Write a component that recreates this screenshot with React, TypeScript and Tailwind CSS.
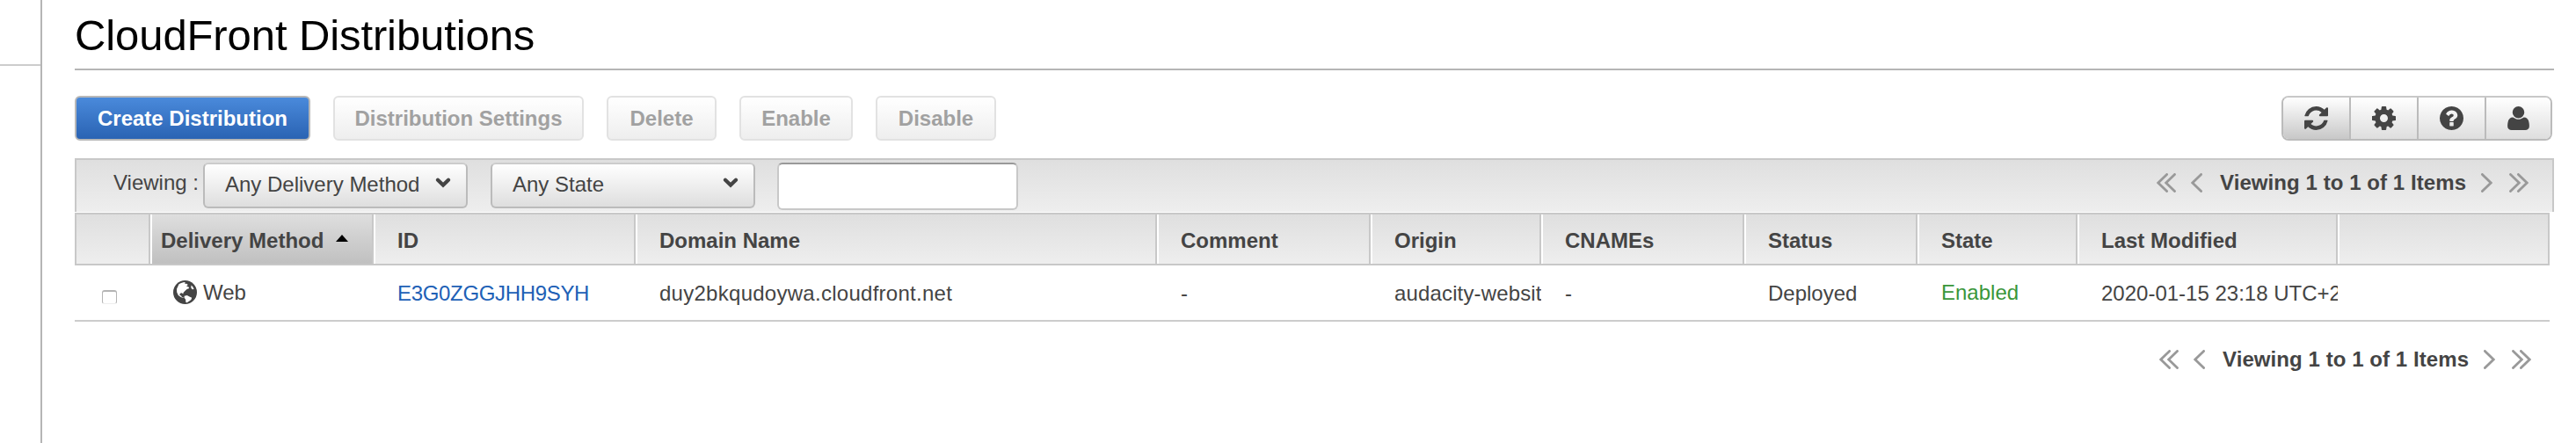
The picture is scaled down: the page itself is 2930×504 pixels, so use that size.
import React from "react";

const ICONS = {
  refresh:
    "M1511 1056q0 5-1 7-64 268-268 434.5t-478 166.5q-146 0-282.5-55t-243.5-157l-129 129q-19 19-45 19t-45-19-19-45v-448q0-26 19-45t45-19h448q26 0 45 19t19 45-19 45l-137 137q71 66 161 102t187 36q134 0 250-65t186-179q11-17 53-117 8-23 30-23h192q13 0 22.5 9.5t9.5 22.5zm25-800v448q0 26-19 45t-45 19h-448q-26 0-45-19t-19-45 19-45l138-138q-148-137-349-137-134 0-250 65t-186 179q-11 17-53 117-8 23-30 23h-199q-13 0-22.5-9.5t-9.5-22.5v-7q65-268 270-434.5t480-166.5q146 0 284 55.5t245 156.5l130-129q19-19 45-19t45 19 19 45z",
  cog: "M1024 896q0-106-75-181t-181-75-181 75-75 181 75 181 181 75 181-75 75-181zm512-109v222q0 12-8 23t-20 13l-185 28q-19 54-39 91 35 50 107 138 10 12 10 25t-9 23q-27 37-99 108t-94 71q-12 0-26-9l-138-108q-44 23-91 38-16 136-29 186-7 28-36 28h-222q-14 0-24.5-8.5t-11.5-21.5l-28-184q-49-16-90-37l-141 107q-10 9-25 9-14 0-25-11-126-114-165-168-7-10-7-23 0-12 8-23 15-21 51-66.5t54-70.5q-27-50-41-99l-183-27q-13-2-21-12.5t-8-23.5v-222q0-12 8-23t19-13l186-28q14-46 39-92-40-57-107-138-10-12-10-24 0-10 9-23 26-36 98.5-107.5t94.5-71.5q13 0 26 10l138 107q44-23 91-38 16-136 29-186 7-28 36-28h222q14 0 24.5 8.5t11.5 21.5l28 184q49 16 90 37l142-107q9-9 24-9 13 0 25 10 129 119 165 170 7 8 7 22 0 12-8 23-15 21-51 66.5t-54 70.5q26 50 41 98l183 28q13 2 21 12.5t8 23.5z",
  help: "M896 1376v-192q0-14-9-23t-23-9h-192q-14 0-23 9t-9 23v192q0 14 9 23t23 9h192q14 0 23-9t9-23zm256-672q0-88-55.5-163t-138.5-116-170-41q-243 0-371 213-15 24 8 42l132 100q7 6 19 6 16 0 25-12 53-68 86-92 34-24 86-24 48 0 85.5 26t37.5 59q0 38-20 61t-68 45q-63 28-115.5 86.5t-52.5 125.5v36q0 14 9 23t23 9h192q14 0 23-9t9-23q0-19 21.5-49.5t54.5-49.5q32-18 49-28.5t46-35 44.5-48 28-60.5 12.5-81zm384 192q0 209-103 385.5t-279.5 279.5-385.5 103-385.5-103-279.5-279.5-103-385.5 103-385.5 279.5-279.5 385.5-103 385.5 103 279.5 279.5 103 385.5z",
  user: "M1472 1405q0 120-73 189.5t-194 69.5h-874q-121 0-194-69.5t-73-189.5q0-53 3.5-103.5t14-109 26.5-108.5 43-97.5 62-81 85.5-53.500 111.500-20q9 0 42 21.500t74.500 48 108 48 133.500 21.500 133.500-21.500 108-48 74.500-48 42-21.500q61 0 111.500 20t85.500 53.500 62 81 43 97.500 26.500 108.500 14 109 3.500 103.500zm-320-893q0 159-112.500 271.500t-271.500 112.500-271.500-112.500-112.500-271.500 112.500-271.500 271.500-112.500 271.500 112.500 112.500 271.500z",
};

function ToolIcon({ d }: { d: string }) {
  return (
    <svg viewBox="0 128 1536 1536" className="size-[27px] fill-[#444]">
      <path d={d} />
    </svg>
  );
}

function Globe() {
  return (
    <svg viewBox="0 0 27 27" className="size-[27px] shrink-0">
      <circle cx="13.5" cy="13.5" r="13.5" fill="#444" />
      <path
        fill="#fff"
        d="M6.500 4.300 9 2.900l3.300-.9 1.800.7-1.200 1.400 2.300-.4 1.600 1.300-1.800 1.800 2.300.5.9 1.700-2.600 1-2.200 2-1.700 1.700-.5 1.700-1.300-1.100-2.100.4-.4 2.100 1.700.6.8 1.700 1.900.3-.5.700-2.600-1.100-2.900-2.100-1.600-3.500L4 9.800z"
      />
      <path fill="#fff" d="m12.700 17.800 3-.7 2.800 1.500 2.700 1.200-.8 2.300-2.400 1.700-2.300 1.500-1.300-.3-.3-3.200-1.500-2zM20.500 5.600l1.800 1.700 1.300 2.700-1.800.3-1.500-1.900z" />
    </svg>
  );
}

function Chevron({ double = false, flip = false }: { double?: boolean; flip?: boolean }) {
  return (
    <svg
      viewBox={double ? "0 0 22 22" : "0 0 13 22"}
      className={
        (double ? "w-[22px]" : "w-[13px]") + " h-[22px] shrink-0 fill-none stroke-[#999] stroke-[2.8]" + (flip ? " -scale-x-100" : "")
      }
      strokeLinecap="round"
    >
      <path d="M11.600 1.400 1.800 11l9.800 9.600" />
      {double && <path d="M20.500 1.400 10.700 11l9.800 9.600" />}
    </svg>
  );
}

function Pager() {
  return (
    <div className="flex h-7 items-center font-bold">
      <Chevron double />
      <span className="w-[17px]" />
      <Chevron />
      <span className="w-[299px] pl-[20px] tracking-[0.07px]">Viewing 1 to 1 of 1 Items</span>
      <span className="w-[18px]" />
      <Chevron flip />
      <span className="w-[19px]" />
      <Chevron double flip />
    </div>
  );
}

function Disabled({ children, w }: { children: string; w: string }) {
  return (
    <button
      className={
        w +
        " h-[51px] rounded-[6px] border-2 border-[#e2e2e2] bg-linear-to-b from-white to-[#eeeeee] pt-px text-center font-bold text-[#a1a1a1]"
      }
    >
      {children}
    </button>
  );
}

function Select({ label }: { label: string }) {
  return (
    <div className="flex h-[52px] w-[301px] items-center justify-between rounded-[6px] border-2 border-[#bbb] border-t-[#ccc] bg-linear-to-b from-white to-[#dedede] pr-[17px] pl-[23px]">
      <span className="-mt-[3px]">{label}</span>
      <svg viewBox="0 0 18 12" className="-mt-1.5 h-3 w-[18px] fill-none stroke-[#444] stroke-[4.2]" strokeLinecap="round">
        <path d="M3 2.800 9 8.600l6-5.800" />
      </svg>
    </div>
  );
}

const COLUMNS: { title: string; w: string; cell: React.ReactNode }[] = [
  { title: "ID", w: "w-[298px]", cell: <a className="tracking-[-0.33px] text-[#2060b6]">E3G0ZGGJHH9SYH</a> },
  { title: "Domain Name", w: "w-[593px]", cell: <span className="tracking-[0.27px]">duy2bkqudoywa.cloudfront.net</span> },
  { title: "Comment", w: "w-[243px]", cell: "-" },
  { title: "Origin", w: "w-[194px]", cell: <span className="tracking-[0.15px]">audacity-website</span> },
  { title: "CNAMEs", w: "w-[231px]", cell: "-" },
  { title: "Status", w: "w-[197px]", cell: "Deployed" },
  { title: "State", w: "w-[182px]", cell: <span className="relative -top-px text-[#3a963a]">Enabled</span> },
  { title: "Last Modified", w: "w-[296px]", cell: "2020-01-15 23:18 UTC+2" },
];

export default function App() {
  return (
    <div className="flex h-[504px] w-[2930px] overflow-hidden bg-white font-['Liberation_Sans',Arial,sans-serif] text-[24px] leading-7 whitespace-nowrap text-[#444]">
      <aside className="w-12 shrink-0 border-r-2 border-[#b5b5b5]">
        <div className="h-[75px] border-b-2 border-[#ccc]" />
      </aside>
      <main className="ml-[37px] w-[2820px]">
        <h1 className="h-20 border-b-2 border-[#b5b5b5] pt-[12px] text-[49px] leading-[56px] tracking-[-0.1px] text-black">
          CloudFront Distributions
        </h1>

        <div className="mt-[29px] flex h-[51px] justify-between pr-[2px]">
          <div className="flex">
            <button className="mr-[26px] h-[51px] w-[268px] rounded-[6px] border-2 border-[#b8b8b8] bg-linear-to-b from-[#4a8adb] to-[#2a63b3] pt-px font-bold text-white">
              Create Distribution
            </button>
            <div className="flex gap-[26px]">
              <Disabled w="w-[285px]">Distribution Settings</Disabled>
              <Disabled w="w-[125px]">Delete</Disabled>
              <Disabled w="w-[129px]">Enable</Disabled>
              <Disabled w="w-[137px]">Disable</Disabled>
            </div>
          </div>
          <div className="flex w-[308px] overflow-hidden rounded-[8px] border-2 border-[#bbb] border-t-[#c8c8c8]">
            <button className="flex w-[77px] items-center justify-center border-r-2 border-[#bbb] bg-linear-to-b from-white to-[#c8c8c8]">
              <ToolIcon d={ICONS.refresh} />
            </button>
            <button className="flex w-[77px] items-center justify-center border-r-2 border-[#bbb] bg-linear-to-b from-white to-[#dedede]">
              <ToolIcon d={ICONS.cog} />
            </button>
            <button className="flex w-[77px] items-center justify-center border-r-2 border-[#bbb] bg-linear-to-b from-white to-[#dedede]">
              <ToolIcon d={ICONS.help} />
            </button>
            <button className="flex w-[73px] items-center justify-center bg-linear-to-b from-white to-[#dedede]">
              <ToolIcon d={ICONS.user} />
            </button>
          </div>
        </div>

        <div className="mt-5 flex h-[61px] justify-between border-2 border-b-0 border-[#c8c8c8] bg-linear-to-b from-[#dfdfdf] to-[#eee] pr-[27px] pl-[42px]">
          <div className="flex pt-[3px]">
            <span className="w-[102px] pt-[9px]">Viewing :</span>
            <Select label="Any Delivery Method" />
            <span className="w-[26px]" />
            <Select label="Any State" />
            <input className="ml-[25px] h-[54px] w-[274px] rounded-[6px] border-2 border-[#c8c8c8] border-t-[#999] bg-white" />
          </div>
          <div className="pt-3">
            <Pager />
          </div>
        </div>

        <div className="mt-px w-[2815px]">
          <div className="flex h-[60px] border-2 border-[#c8c8c8] bg-linear-to-b from-[#dfdfdf] to-[#eee] font-bold">
            <div className="w-[84px] border-r-2 border-[#c8c8c8]" />
            <div className="flex w-[254px] items-center border-r-2 border-l-2 border-[#c8c8c8] border-l-white bg-linear-to-b from-[#dedede] to-[#c0c0c0] pt-[3px] pl-[10px]">
              Delivery Method
              <svg viewBox="0 0 14 8" className="-mt-1.5 ml-[14px] h-2 w-3.5">
                <path d="M7 0l7 8H0z" />
              </svg>
            </div>
            {COLUMNS.map((c) => (
              <div
                key={c.title}
                className={c.w + " flex items-center border-r-2 border-l-2 border-[#c8c8c8] border-l-white pt-[3px] pl-[25px]"}
              >
                {c.title}
              </div>
            ))}
            <div className="grow border-l-2 border-white" />
          </div>
          <div className="flex h-16 border-b-2 border-[#ccc] pl-[2px]">
            <div className="w-[84px] pt-7 pl-[29px]">
              <div className="h-4 w-[17px] rounded-[3px] border border-t-2 border-[#b4b4b4] border-b-[#eee]" />
            </div>
            <div className="flex w-[254px] pt-[17px] pl-[26px]">
              <Globe />
              <span className="ml-[7px]">Web</span>
            </div>
            {COLUMNS.map((c) => (
              <div key={c.title} className={c.w + " overflow-hidden pt-[18px] pl-[27px]"}>
                {c.cell}
              </div>
            ))}
          </div>
        </div>

        <div className="mt-[29px] flex justify-end pr-[26px]">
          <Pager />
        </div>
      </main>
    </div>
  );
}
